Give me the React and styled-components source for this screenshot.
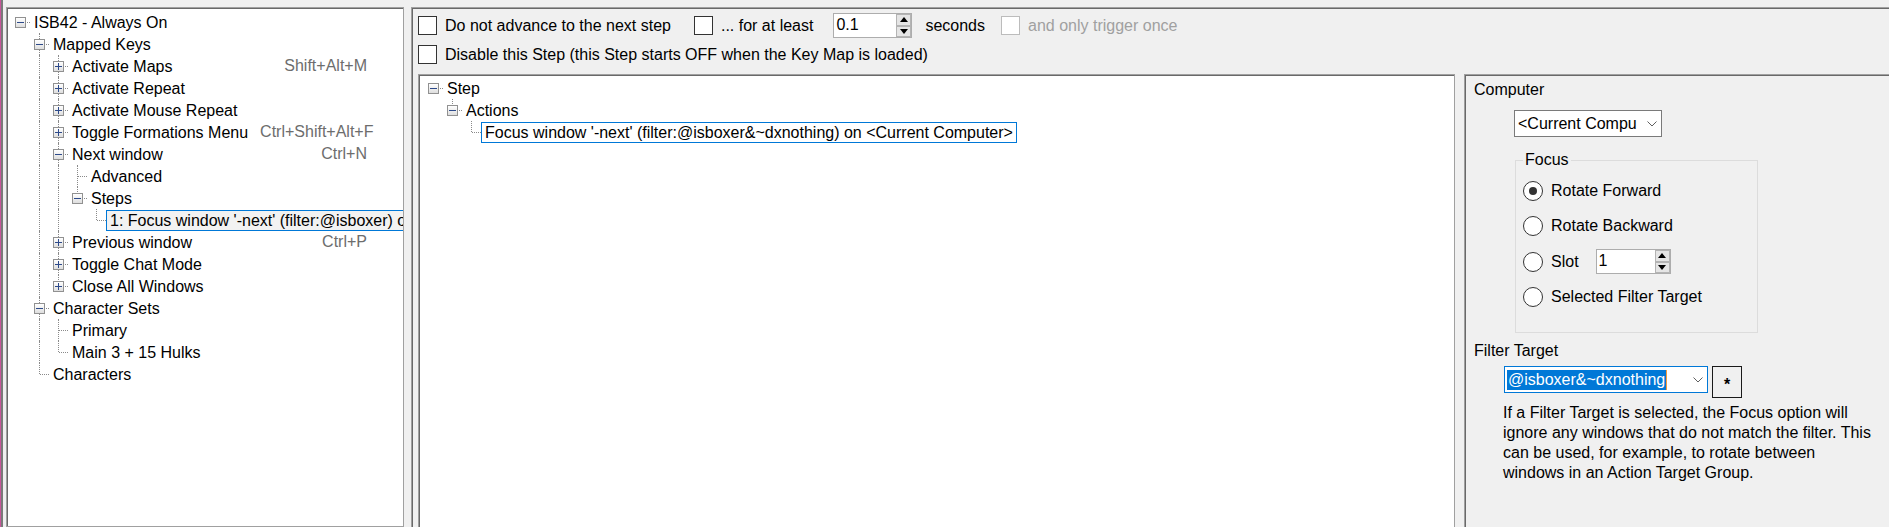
import React from 'react'
import styled, { createGlobalStyle } from 'styled-components'

const GlobalStyle = createGlobalStyle`
  html, body {
    margin: 0;
    padding: 0;
    background: #f0f0f0;
    overflow: hidden;
  }
  body {
    font-family: "Liberation Sans", Arial, sans-serif;
    font-size: 16px;
    color: #000;
  }
`

const keyTree = [
  {
    label: 'ISB42 - Always On', exp: 'open', children: [
      {
        label: 'Mapped Keys', exp: 'open', children: [
          { label: 'Activate Maps', exp: 'closed', keys: 'Shift+Alt+M' },
          { label: 'Activate Repeat', exp: 'closed' },
          { label: 'Activate Mouse Repeat', exp: 'closed' },
          { label: 'Toggle Formations Menu', exp: 'closed', keys: 'Ctrl+Shift+Alt+F', nudge: 6 },
          {
            label: 'Next window', exp: 'open', keys: 'Ctrl+N', children: [
              { label: 'Advanced' },
              {
                label: 'Steps', exp: 'open', children: [
                  { label: "1: Focus window '-next' (filter:@isboxer) on <Current Computer>", selected: true },
                ],
              },
            ],
          },
          { label: 'Previous window', exp: 'closed', keys: 'Ctrl+P' },
          { label: 'Toggle Chat Mode', exp: 'closed' },
          { label: 'Close All Windows', exp: 'closed' },
        ],
      },
      {
        label: 'Character Sets', exp: 'open', children: [
          { label: 'Primary' },
          { label: 'Main 3 + 15 Hulks' },
        ],
      },
      { label: 'Characters' },
    ],
  },
]

const stepTree = [
  {
    label: 'Step', exp: 'open', children: [
      {
        label: 'Actions', exp: 'open', children: [
          { label: "Focus window '-next' (filter:@isboxer&~dxnothing) on <Current Computer>", selected: true },
        ],
      },
    ],
  },
]

// walk the tree and keep, for every row, which ancestor columns still need a line
function flatten(nodes, depth = 0, guides = [], out = []) {
  nodes.forEach((n, i) => {
    const last = i === nodes.length - 1
    out.push({ ...n, depth, guides, last, first: depth === 0 && i === 0 })
    if (n.children && n.exp === 'open') flatten(n.children, depth + 1, [...guides, !last], out)
  })
  return out
}

const Window = styled.div`
  display: flex;
  height: 527px;
  box-sizing: border-box;
  border-left: 1px solid #c8559a;
  overflow: hidden;
`

const Edge = styled.div`
  flex: 0 0 5px;
  border-left: 2px solid #7a7a7a;
  box-sizing: border-box;
`

const TreePane = styled.div`
  flex: 0 0 398px;
  margin-top: 7px;
  box-sizing: border-box;
  background: #fff;
  border: 1px solid #a0a0a0;
  box-shadow: inset 1px 1px 0 #696969;
  padding: 3px 0 0 4px;
  overflow: hidden;
`

const Splitter = styled.div`
  flex: 0 0 7px;
`

const MainArea = styled.div`
  flex: 1;
  min-width: 0;
  margin-top: 7px;
  display: flex;
  flex-direction: column;
  border-top: 1px solid #a0a0a0;
  border-left: 1px solid #a0a0a0;
  box-shadow: inset 1px 1px 0 #696969;
  padding: 5px 0 0 6px;
`

const OptionRow = styled.div`
  display: flex;
  align-items: center;
  height: ${p => p.$h}px;
  margin-top: ${p => p.$mt || 0}px;
  white-space: nowrap;
`

const CheckBox = styled.span`
  flex: 0 0 19px;
  height: 19px;
  box-sizing: border-box;
  border: 1px solid ${p => (p.$disabled ? '#bcbcbc' : '#333')};
  background: #fff;
  margin-left: ${p => p.$gap || 0}px;
`

const OptionText = styled.span`
  margin-left: ${p => p.$gap ?? 8}px;
  color: ${p => (p.$disabled ? '#a0a0a0' : '#000')};
`

const SpinBox = styled.div`
  display: flex;
  width: ${p => p.$w}px;
  height: 25px;
  box-sizing: border-box;
  border: 1px solid #adadad;
  background: #fff;
  margin-left: ${p => p.$gap || 0}px;
`

const SpinValue = styled.span`
  padding-left: 2px;
  line-height: 22px;
`

const SpinButtons = styled.div`
  display: flex;
  flex-direction: column;
  width: 15px;
  margin-left: auto;
`

const SpinButton = styled.span`
  flex: 1;
  display: flex;
  align-items: center;
  justify-content: center;
  background: #e5e5e5;
  border: 1px solid #b4b4b4;
  margin: ${p => (p.$down ? '0 0 0 0' : '0 0 0 0')};
  &::after {
    content: '';
    border-left: 4px solid transparent;
    border-right: 4px solid transparent;
    ${p => (p.$down ? 'border-top: 5px solid #000;' : 'border-bottom: 5px solid #000;')}
  }
`

const Lower = styled.div`
  flex: 1;
  display: flex;
  gap: 9px;
  margin-top: 10px;
  min-height: 0;
`

const StepPane = styled.div`
  flex: 0 0 1037px;
  box-sizing: border-box;
  background: #fff;
  border: 1px solid #a0a0a0;
  border-bottom: none;
  box-shadow: inset 1px 1px 0 #696969;
  padding: 2px 0 0 5px;
  overflow: hidden;
`

const Inspector = styled.div`
  flex: 0 0 425px;
  box-sizing: border-box;
  border-top: 1px solid #a0a0a0;
  border-left: 1px solid #a0a0a0;
  box-shadow: inset 1px 1px 0 #696969;
  padding: 6px 0 0 9px;
  display: flex;
  flex-direction: column;
  align-items: flex-start;
`

const Row = styled.div`
  display: flex;
  align-items: center;
  height: 22px;
  white-space: nowrap;
`

const Guide = styled.span`
  position: relative;
  flex: 0 0 19px;
  align-self: stretch;
  &::before {
    content: '';
    display: ${p => (p.$line ? 'block' : 'none')};
    position: absolute;
    left: 9px;
    top: 0;
    bottom: 0;
    border-left: 1px dotted #8a8a8a;
  }
`

const Joint = styled.span`
  position: relative;
  flex: 0 0 19px;
  align-self: stretch;
  display: flex;
  justify-content: center;
  padding-top: 6px;
  box-sizing: border-box;
  &::before {
    content: '';
    display: ${p => (p.$top || p.$bottom ? 'block' : 'none')};
    position: absolute;
    left: 9px;
    top: ${p => (p.$top ? '0' : '11px')};
    bottom: ${p => (p.$bottom ? '0' : '11px')};
    border-left: 1px dotted #8a8a8a;
  }
  &::after {
    content: '';
    position: absolute;
    left: 10px;
    right: 0;
    top: 11px;
    border-top: 1px dotted #8a8a8a;
  }
`

const Expander = styled.span`
  position: relative;
  z-index: 1;
  width: 11px;
  height: 11px;
  box-sizing: border-box;
  border: 1px solid #919191;
  background: linear-gradient(#ffffff, #dedede);
  &::before {
    content: '';
    position: absolute;
    left: 1px;
    right: 1px;
    top: 4px;
    height: 1px;
    background: #2d4a8a;
  }
  &::after {
    content: '';
    display: ${p => (p.$open ? 'none' : 'block')};
    position: absolute;
    left: 4px;
    top: 1px;
    bottom: 1px;
    width: 1px;
    background: #2d4a8a;
  }
`

const Label = styled.span`
  flex-shrink: 0;
  line-height: 19px;
  padding: 0 3px;
  border: 1px solid ${p => (p.$selected ? '#0078d7' : 'transparent')};
  background: ${p => (p.$selected ? p.$fill : 'transparent')};
`

const Shortcut = styled.span`
  margin-left: auto;
  padding: 0 ${p => p.$pad}px 0 8px;
  color: #6d6d6d;
  flex-shrink: 0;
`

const TreeView = ({ nodes, selFill, shortcutPad }) => (
  <>
    {flatten(nodes).map((n, i) => (
      <Row key={i}>
        {n.guides.map((g, k) => <Guide key={k} $line={g} />)}
        <Joint $top={!n.first} $bottom={!n.last}>
          {n.exp && <Expander $open={n.exp === 'open'} />}
        </Joint>
        <Label $selected={n.selected} $fill={selFill}>{n.label}</Label>
        {n.keys && <Shortcut $pad={shortcutPad - (n.nudge || 0)}>{n.keys}</Shortcut>}
      </Row>
    ))}
  </>
)

const FieldLabel = styled.div`
  line-height: 18px;
  margin-top: ${p => p.$mt || 0}px;
`

const ComboBox = styled.div`
  display: flex;
  align-items: center;
  width: ${p => p.$w}px;
  height: 27px;
  box-sizing: border-box;
  border: 1px solid ${p => (p.$focus ? '#0078d7' : '#7a7a7a')};
  background: #fff;
  padding: 0 4px 0 ${p => (p.$focus ? 2 : 3)}px;
  margin: ${p => p.$mt || 0}px 0 0 ${p => p.$ml || 0}px;
  white-space: nowrap;
  overflow: hidden;
`

const Highlight = styled.span`
  background: #0078d7;
  color: #fff;
  line-height: 20px;
  padding: 0 1px;
  border-right: 1px solid #f39a3c;
`

const Chevron = () => (
  <svg width="10" height="6" viewBox="0 0 10 6" style={{ marginLeft: 'auto', flexShrink: 0 }}>
    <polyline points="0.5,0.5 5,5 9.5,0.5" fill="none" stroke="#606060" strokeWidth="1" />
  </svg>
)

const GroupBox = styled.fieldset`
  margin: 14px 0 0 41px;
  width: 243px;
  height: 182px;
  box-sizing: border-box;
  border: 1px solid #dcdcdc;
  padding: 0 0 0 7px;
  min-inline-size: 0;
  legend {
    padding: 0 2px;
    line-height: 18px;
  }
`

const RadioList = styled.div`
  display: flex;
  flex-direction: column;
  gap: 10.5px;
  margin-top: 9px;
`

const RadioRow = styled.div`
  display: flex;
  align-items: center;
  height: 25px;
  gap: 8px;
`

const RadioCircle = styled.span`
  flex: 0 0 20px;
  height: 20px;
  box-sizing: border-box;
  border: 1px solid #333;
  border-radius: 50%;
  background: #fff;
  display: flex;
  align-items: center;
  justify-content: center;
  &::after {
    content: '';
    display: ${p => (p.$checked ? 'block' : 'none')};
    width: 8px;
    height: 8px;
    border-radius: 50%;
    background: #333;
  }
`

const FilterRow = styled.div`
  display: flex;
  align-items: flex-start;
  margin: 6px 0 0 30px;
`

const StarButton = styled.button`
  width: 30px;
  height: 32px;
  margin-left: 4px;
  padding: 5px 0 0;
  border: 1px solid #1a1a1a;
  background: #f0f0f0;
  font: bold 16px "Liberation Sans", Arial, sans-serif;
  color: #000;
`

const Description = styled.p`
  margin: 5px 0 0 29px;
  line-height: 20px;
`

export default function App() {
  return (
    <>
      <GlobalStyle />
      <Window>
        <Edge />
        <TreePane>
          <TreeView nodes={keyTree} selFill="#f2f2f2" shortcutPad={36} />
        </TreePane>
        <Splitter />
        <MainArea>
          <OptionRow $h={25}>
            <CheckBox />
            <OptionText>Do not advance to the next step</OptionText>
            <CheckBox $gap={23} />
            <OptionText>... for at least</OptionText>
            <SpinBox $w={79} $gap={20}>
              <SpinValue>0.1</SpinValue>
              <SpinButtons>
                <SpinButton />
                <SpinButton $down />
              </SpinButtons>
            </SpinBox>
            <OptionText $gap={13}>seconds</OptionText>
            <CheckBox $gap={16} $disabled />
            <OptionText $disabled>and only trigger once</OptionText>
          </OptionRow>
          <OptionRow $h={19} $mt={7}>
            <CheckBox />
            <OptionText>Disable this Step (this Step starts OFF when the Key Map is loaded)</OptionText>
          </OptionRow>
          <Lower>
            <StepPane>
              <TreeView nodes={stepTree} selFill="#fff" shortcutPad={0} />
            </StepPane>
            <Inspector>
              <FieldLabel>Computer</FieldLabel>
              <ComboBox $w={148} $mt={11} $ml={40}>
                <span>&lt;Current Compu</span>
                <Chevron />
              </ComboBox>
              <GroupBox>
                <legend>Focus</legend>
                <RadioList>
                  <RadioRow><RadioCircle $checked />Rotate Forward</RadioRow>
                  <RadioRow><RadioCircle />Rotate Backward</RadioRow>
                  <RadioRow>
                    <RadioCircle />Slot
                    <SpinBox $w={75} $gap={9}>
                      <SpinValue>1</SpinValue>
                      <SpinButtons>
                        <SpinButton />
                        <SpinButton $down />
                      </SpinButtons>
                    </SpinBox>
                  </RadioRow>
                  <RadioRow><RadioCircle />Selected Filter Target</RadioRow>
                </RadioList>
              </GroupBox>
              <FieldLabel $mt={9}>Filter Target</FieldLabel>
              <FilterRow>
                <ComboBox $w={204} $focus>
                  <Highlight>@isboxer&amp;~dxnothing</Highlight>
                  <Chevron />
                </ComboBox>
                <StarButton>*</StarButton>
              </FilterRow>
              <Description>
                If a Filter Target is selected, the Focus option will<br />
                ignore any windows that do not match the filter. This<br />
                can be used, for example, to rotate between<br />
                windows in an Action Target Group.
              </Description>
            </Inspector>
          </Lower>
        </MainArea>
      </Window>
    </>
  )
}
